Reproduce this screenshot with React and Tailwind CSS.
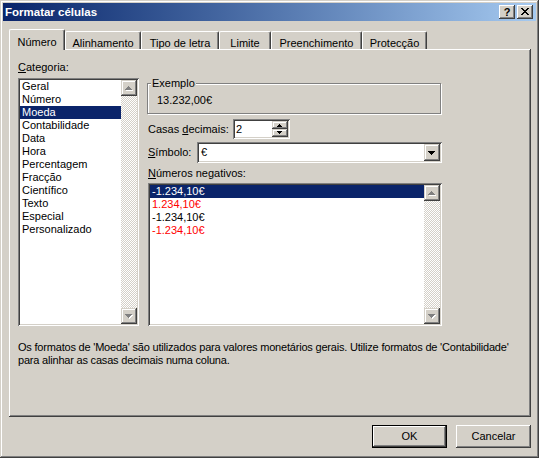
import React from "react";

function Tri({ cx, top, rows, up, fill, dx = 0, dy = 0 }) {
  const out = [];
  for (let r = 0; r < rows; r++) {
    const half = up ? r : rows - 1 - r;
    out.push(
      <rect key={r} x={cx - half + dx} y={top + r + dy} width={half * 2 + 1} height={1} fill={fill} />
    );
  }
  return <>{out}</>;
}

function ScrollBtn({ up }) {
  return (
    <div className="w-[16px] h-[16px] shrink-0 bg-[#d4d0c8] shadow-[inset_-1px_-1px_#404040,inset_1px_1px_#d4d0c8,inset_-2px_-2px_#808080,inset_2px_2px_#fff]">
      <svg width="16" height="16" shapeRendering="crispEdges">
        <Tri cx={7} top={6} rows={4} up={up} fill="#fff" dx={1} dy={1} />
        <Tri cx={7} top={6} rows={4} up={up} fill="#808080" />
      </svg>
    </div>
  );
}

function ScrollBar() {
  return (
    <div className="w-[16px] flex flex-col shrink-0">
      <ScrollBtn up />
      <div className="flex-1 bg-[image:repeating-conic-gradient(#fff_0_25%,#d4d0c8_0_50%)] bg-[length:2px_2px]" />
      <ScrollBtn up={false} />
    </div>
  );
}

function ListBox({ items, className }) {
  return (
    <div className={"bg-white p-[2px] flex shadow-[inset_1px_1px_#808080,inset_-1px_-1px_#fff,inset_2px_2px_#404040,inset_-2px_-2px_#d4d0c8] " + className}>
      <div className="flex-1 flex flex-col overflow-hidden">
        {items.map((it, i) => (
          <div
            key={i}
            className={
              "h-[13px] leading-[13px] pl-[2px] whitespace-nowrap " +
              (it.sel ? "bg-[#0a246a] text-white" : it.red ? "text-[#ff0000]" : "text-black")
            }
          >
            {it.t}
          </div>
        ))}
      </div>
      <ScrollBar />
    </div>
  );
}

function Tab({ label, w, sel }) {
  if (sel) {
    return (
      <div
        className="relative z-10 -ml-[2px] -mb-[1px] h-[21px] pt-[6px] text-center bg-[#d4d0c8] border-t border-l border-white border-r border-r-[#404040] rounded-t-[2px] shadow-[inset_-1px_0_#808080]"
        style={{ width: w + 2 }}
      >
        {label}
      </div>
    );
  }
  return (
    <div
      className="h-[18px] pt-[5px] text-center bg-[#d4d0c8] border-t border-l border-white border-r border-r-[#404040] rounded-t-[2px] shadow-[inset_-1px_0_#808080]"
      style={{ width: w }}
    >
      {label}
    </div>
  );
}

const cats = [
  "Geral",
  "Número",
  "Moeda",
  "Contabilidade",
  "Data",
  "Hora",
  "Percentagem",
  "Fracção",
  "Científico",
  "Texto",
  "Especial",
  "Personalizado",
].map((t) => ({ t, sel: t === "Moeda" }));

const negs = [
  { t: "-1.234,10€", sel: true },
  { t: "1.234,10€", red: true },
  { t: "-1.234,10€" },
  { t: "-1.234,10€", red: true },
];

export default function App() {
  return (
    <div className="w-[539px] h-[458px] bg-[#d4d0c8] p-[3px] flex flex-col text-[11px] leading-[13px] text-black font-['Liberation_Sans',Arial,sans-serif] shadow-[inset_-1px_-1px_#404040,inset_1px_1px_#d4d0c8,inset_-2px_-2px_#808080,inset_2px_2px_#fff]">
      {/* Title bar */}
      <div className="h-[18px] shrink-0 flex items-center bg-linear-to-r from-[#0a246a] to-[#a6caf0] pl-[2px] pr-[3px]">
        <span className="text-white font-bold text-[11.5px] leading-[13px]">Formatar células</span>
        <div className="ml-auto flex gap-[2px]">
          <div className="w-[16px] h-[14px] bg-[#d4d0c8] flex items-center justify-center font-bold text-[11px] leading-[11px] shadow-[inset_-1px_-1px_#404040,inset_1px_1px_#fff,inset_-2px_-2px_#808080]">
            ?
          </div>
          <div className="w-[16px] h-[14px] bg-[#d4d0c8] shadow-[inset_-1px_-1px_#404040,inset_1px_1px_#fff,inset_-2px_-2px_#808080]">
            <svg width="16" height="14" shapeRendering="crispEdges">
              {[0, 1, 2, 3, 4, 5, 6].map((i) => (
                <g key={i}>
                  <rect x={4 + i} y={3 + i} width={2} height={1} fill="#000" />
                  <rect x={10 - i} y={3 + i} width={2} height={1} fill="#000" />
                </g>
              ))}
            </svg>
          </div>
        </div>
      </div>

      {/* Tabs */}
      <div className="mt-[8px] h-[20px] flex items-end pl-[8px] shrink-0">
        <Tab label="Número" w={54} sel />
        <Tab label="Alinhamento" w={76} />
        <Tab label="Tipo de letra" w={78} />
        <Tab label="Limite" w={52} />
        <Tab label="Preenchimento" w={91} />
        <Tab label="Protecção" w={65} />
      </div>

      {/* Panel */}
      <div className="ml-[6px] w-[522px] h-[368px] shrink-0 pt-[12px] pl-[9px] shadow-[inset_-1px_-1px_#404040,inset_1px_1px_#fff,inset_-2px_-2px_#808080]">
        <div className="flex">
          <div className="w-[121px] flex flex-col">
            <div className="h-[13px]">
              <span className="underline">C</span>ategoria:
            </div>
            <ListBox items={cats} className="mt-[4px] h-[248px]" />
          </div>

          <div className="ml-[8px] w-[295px] flex flex-col pt-[17px]">
            {/* Exemplo group */}
            <div className="relative mt-[5px] w-[294px] h-[31px] border border-[#808080] shadow-[1px_1px_0_#fff,inset_1px_1px_0_#fff] pl-[9px] pt-[10px]">
              <div className="absolute -top-[7px] left-[3px] px-[1px] bg-[#d4d0c8]">Exemplo</div>
              13.232,00€
            </div>

            {/* Casas decimais */}
            <div className="mt-[5px] h-[20px] flex items-center">
              <div className="w-[86px] pl-[1px]">
                Casas <span className="underline">d</span>ecimais:
              </div>
              <div className="w-[57px] h-[20px] bg-white p-[2px] flex shadow-[inset_1px_1px_#808080,inset_-1px_-1px_#fff,inset_2px_2px_#404040,inset_-2px_-2px_#d4d0c8]">
                <div className="flex-1 pl-[1px] leading-[16px]">2</div>
                <div className="w-[16px] flex flex-col">
                  <div className="h-[8px] bg-[#d4d0c8] shadow-[inset_-1px_-1px_#404040,inset_1px_1px_#d4d0c8,inset_-2px_-2px_#808080,inset_2px_2px_#fff]">
                    <svg width="16" height="8" shapeRendering="crispEdges">
                      <Tri cx={7} top={3} rows={3} up fill="#000" />
                    </svg>
                  </div>
                  <div className="h-[8px] bg-[#d4d0c8] shadow-[inset_-1px_-1px_#404040,inset_1px_1px_#d4d0c8,inset_-2px_-2px_#808080,inset_2px_2px_#fff]">
                    <svg width="16" height="8" shapeRendering="crispEdges">
                      <Tri cx={7} top={2} rows={3} up={false} fill="#000" />
                    </svg>
                  </div>
                </div>
              </div>
            </div>

            {/* Símbolo */}
            <div className="mt-[3px] h-[21px] flex items-center">
              <div className="w-[50px] pl-[1px]">
                <span className="underline">S</span>ímbolo:
              </div>
              <div className="w-[245px] h-[21px] bg-white p-[2px] flex shadow-[inset_1px_1px_#808080,inset_-1px_-1px_#fff,inset_2px_2px_#404040,inset_-2px_-2px_#d4d0c8]">
                <div className="flex-1 pl-[2px] leading-[17px]">€</div>
                <div className="w-[16px] h-[17px] bg-[#d4d0c8] shadow-[inset_-1px_-1px_#404040,inset_1px_1px_#d4d0c8,inset_-2px_-2px_#808080,inset_2px_2px_#fff]">
                  <svg width="16" height="17" shapeRendering="crispEdges">
                    <Tri cx={7} top={7} rows={4} up={false} fill="#000" />
                  </svg>
                </div>
              </div>
            </div>

            {/* Números negativos */}
            <div className="mt-[4px] h-[13px] pl-[1px]">
              <span className="underline">N</span>úmeros negativos:
            </div>
            <ListBox items={negs} className="mt-[3px] ml-[1px] w-[294px] h-[143px]" />
          </div>
        </div>

        <div className="mt-[15px] whitespace-nowrap tracking-[-0.2px]">
          <div>
            Os formatos de 'Moeda' são utilizados para valores monetários gerais. Utilize formatos de 'Contabilidade'
          </div>
          <div>para alinhar as casas decimais numa coluna.</div>
        </div>
      </div>

      {/* Buttons */}
      <div className="mt-[8px] flex justify-end gap-[9px] pr-[5px]">
        <div className="w-[75px] h-[23px] flex items-center justify-center bg-[#d4d0c8] shadow-[inset_0_0_0_1px_#000,inset_-2px_-2px_#404040,inset_2px_2px_#fff,inset_-3px_-3px_#808080]">
          OK
        </div>
        <div className="w-[75px] h-[23px] flex items-center justify-center bg-[#d4d0c8] shadow-[inset_-1px_-1px_#404040,inset_1px_1px_#fff,inset_-2px_-2px_#808080]">
          Cancelar
        </div>
      </div>
    </div>
  );
}
